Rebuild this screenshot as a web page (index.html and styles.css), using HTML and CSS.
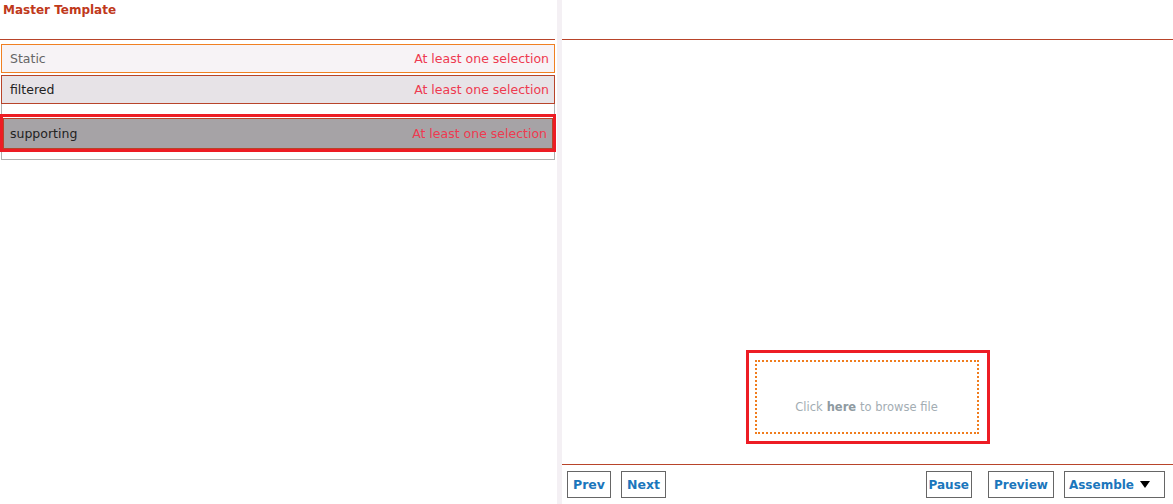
FILE: index.html
```html
<!DOCTYPE html>
<html lang="en">
<head>
    <meta charset="UTF-8">
    <title>Master Template</title>
    <link rel="stylesheet" href="styles.css">
</head>
<body>
    <div class="left">
        <div class="left-head">Master Template</div>
        <div class="list">
            <div class="row row-static">
                <span class="name">Static</span>
                <span class="rule">At least one selection</span>
            </div>
            <div class="group">
                <div class="row row-filtered">
                    <span class="name">filtered</span>
                    <span class="rule">At least one selection</span>
                </div>
                <div class="group-body">
                    <div class="row row-supporting">
                        <span class="name">supporting</span>
                        <span class="rule">At least one selection</span>
                    </div>
                </div>
            </div>
        </div>
    </div>
    <div class="divider"></div>
    <div class="right">
        <div class="right-head"></div>
        <div class="stage">
            <div class="drop">
                <div class="drop-inner">Click <b>here</b> to browse file</div>
            </div>
        </div>
        <div class="footer">
            <button class="btn">Prev</button>
            <button class="btn">Next</button>
            <span class="spacer"></span>
            <button class="btn btn-slim btn-pause">Pause</button>
            <button class="btn btn-slim btn-preview">Preview</button>
            <button class="btn btn-slim btn-assemble">Assemble <span class="caret"></span></button>
        </div>
    </div>
</body>
</html>
```

FILE: styles.css
```css
body {
    margin: 0;
    height: 504px;
    display: flex;
    font-family: "DejaVu Sans", Verdana, sans-serif;
    background-color: #fff;
    overflow: hidden;
}
.left {
    width: 557px;
    flex: none;
}
.left-head {
    height: 40px;
    box-sizing: border-box;
    padding: 3px 0 0 3px;
    font-size: 12px;
    font-weight: bold;
    color: #c0391b;
    border-bottom: 1px solid #b8442a;
    margin-right: 2px;
}
.list {
    padding: 4px 0 0 1px;
    width: 554px;
}
.row {
    display: flex;
    justify-content: space-between;
    align-items: center;
    height: 29px;
    box-sizing: border-box;
    padding: 0 5px 0 8px;
    font-size: 12.5px;
    border: 1px solid #b8442a;
}
.rule {
    color: #ee3a50;
}
.row-static {
    background-color: #f7f3f6;
    border-color: #f08022;
    color: #666;
}
.group {
    margin-top: 2px;
}
.row-filtered {
    background-color: #e7e3e7;
    color: #222;
}
.group-body {
    border: 1px solid #b0b0b0;
    border-top: none;
    padding: 14px 1px 10px 1px;
}
.row-supporting {
    height: 31px;
    position: relative;
    background-color: #a6a3a6;
    color: #222;
    padding-left: 6px;
}
.row-supporting::after {
    content: "";
    position: absolute;
    left: -4px;
    right: -4px;
    top: -5px;
    bottom: -4px;
    border: 3px solid #ed1c24;
}
.divider {
    width: 5px;
    flex: none;
    background-color: #f4f0f4;
}
.right {
    flex: 1;
    display: flex;
    flex-direction: column;
}
.right-head {
    height: 40px;
    box-sizing: border-box;
    border-bottom: 1px solid #b8442a;
    flex: none;
}
.stage {
    flex: 1;
    display: flex;
    align-items: flex-end;
    justify-content: center;
    padding-bottom: 20px;
}
.drop {
    width: 244px;
    height: 94px;
    box-sizing: border-box;
    border: 3px solid #ed1c24;
    padding: 7px 8px 7px 6px;
}
.drop-inner {
    height: 100%;
    box-sizing: border-box;
    border: 2px dotted #f07d1e;
    display: flex;
    align-items: flex-end;
    justify-content: center;
    padding-bottom: 18px;
    font-size: 11.5px;
    color: #a3adb3;
}
.drop-inner b {
    color: #8e9aa1;
    margin: 0 4px;
}
.footer {
    height: 40px;
    box-sizing: border-box;
    flex: none;
    border-top: 1px solid #b8442a;
    display: flex;
    align-items: flex-start;
    gap: 10px;
    padding: 6px 8px 0 5px;
}
.spacer {
    flex: 1;
}
.btn {
    height: 27px;
    box-sizing: border-box;
    padding: 0 5px;
    background-color: #fff;
    border: 1px solid #666;
    font-family: "DejaVu Sans", Verdana, sans-serif;
    font-size: 12.5px;
    font-weight: bold;
    color: #1b76bc;
    display: flex;
    align-items: center;
}
.btn-slim {
    font-size: 12px;
    padding: 0 2px;
}
.btn-pause {
    margin-right: 6px;
}
.btn-preview {
    padding: 0 5px;
}
.btn-assemble {
    padding: 0 14px 0 4px;
}
.caret {
    display: inline-block;
    margin-left: 6px;
    width: 0;
    height: 0;
    border-left: 5px solid transparent;
    border-right: 5px solid transparent;
    border-top: 7px solid #000;
}
```
